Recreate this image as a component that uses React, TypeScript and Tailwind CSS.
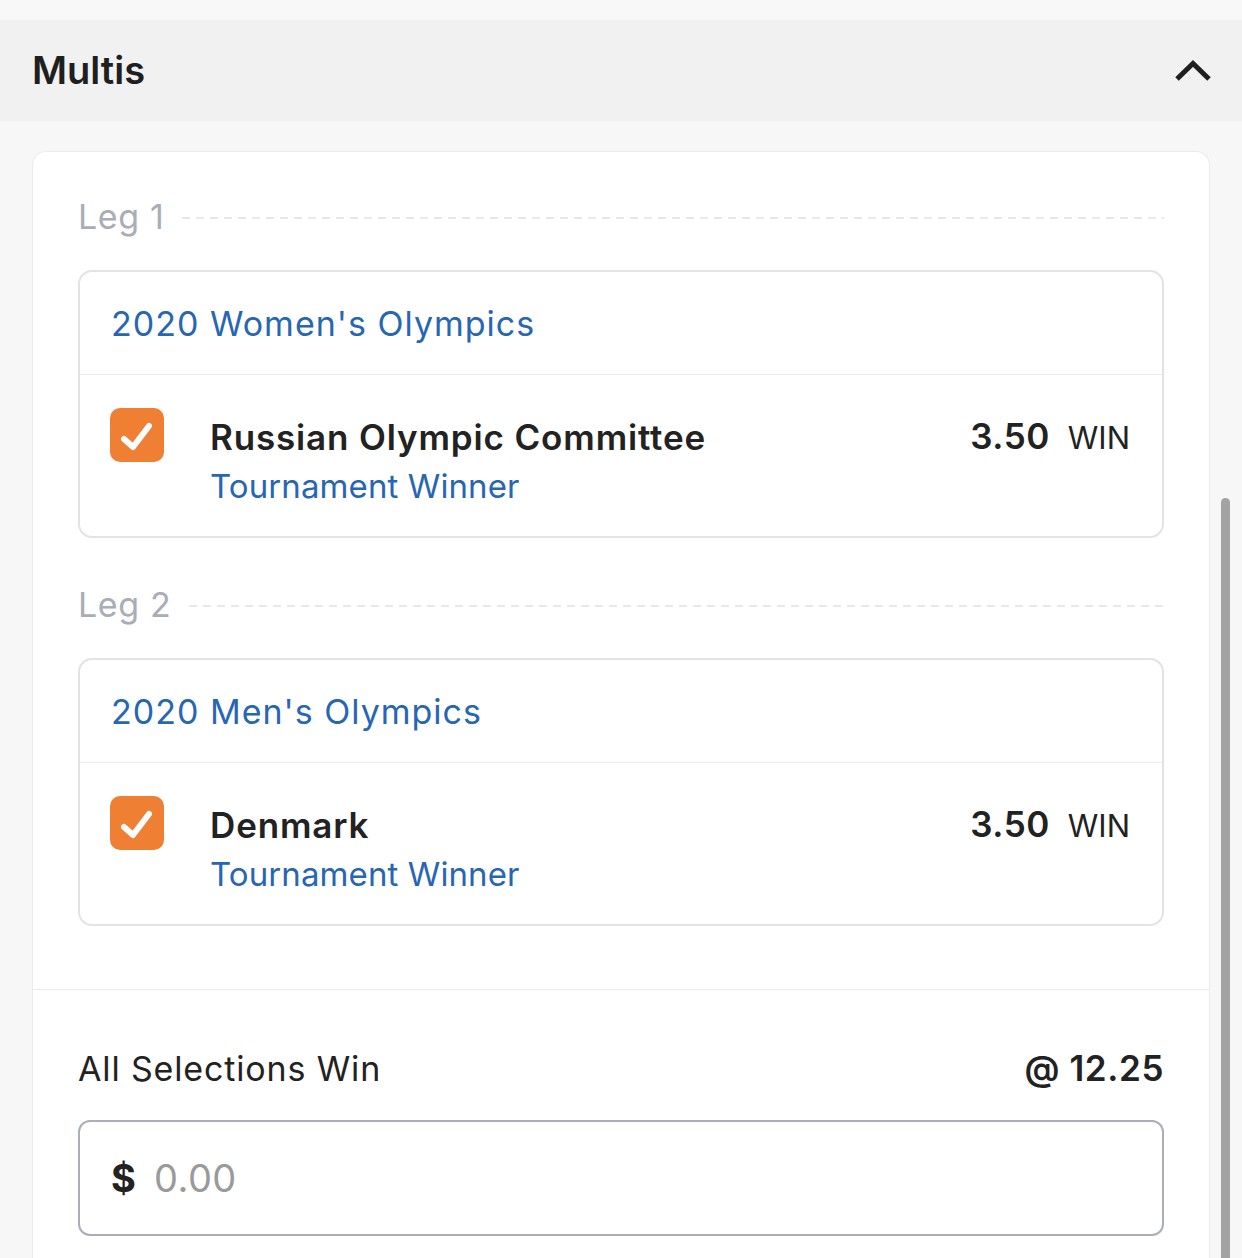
import React from "react";

const legs = [
  { id: 1, event: "2020 Women's Olympics", runner: "Russian Olympic Committee", market: "Tournament Winner", price: "3.50" },
  { id: 2, event: "2020 Men's Olympics", runner: "Denmark", market: "Tournament Winner", price: "3.50" },
];

function Check() {
  return (
    <div className="flex h-[54px] w-[54px] shrink-0 items-center justify-center rounded-[10px] bg-[#ef7f32]">
      <svg width="54" height="54" viewBox="0 0 54 54" fill="none" aria-hidden>
        <path d="M14 31 L23 39 L39 18" stroke="#fff" strokeWidth="6" strokeLinecap="round" strokeLinejoin="round" />
      </svg>
    </div>
  );
}

function LegLabel({ n }: { n: number }) {
  return (
    <div className="flex h-[40px] items-center gap-[18px]">
      <span className="text-[34px] leading-[40px] tracking-[0.6px] text-[#a9adb6]">Leg {n}</span>
      <div className="mt-[2px] h-[2px] flex-1 bg-[linear-gradient(to_right,#e8e8e8_60%,transparent_0%)] bg-[length:14px_2px] bg-repeat-x" />
    </div>
  );
}

function LegCard({ leg }: { leg: (typeof legs)[number] }) {
  return (
    <div className="rounded-[14px] border-2 border-[#e3e3e3] bg-white">
      <div className="flex h-[103px] items-center border-b border-[#ebebeb] pl-[31px] text-[34px] tracking-[1px] text-[#2766b3]">
        {leg.event}
      </div>
      <div className="flex items-start pb-[30px] pl-[30px] pr-[32px] pt-[33px]">
        <Check />
        <div className="ml-[46px] flex-1">
          <div className="flex items-center justify-between leading-[56px]">
            <span className="text-[35px] font-semibold tracking-[0.85px] text-[#222]">{leg.runner}</span>
            <span className="flex items-baseline gap-[18px]">
              <span className="text-[35px] font-semibold tracking-[0.5px] text-[#222]">{leg.price}</span>
              <span className="text-[31px] text-[#222]">WIN</span>
            </span>
          </div>
          <div className="text-[33px] leading-[40px] tracking-[0.1px] text-[#2766b3]">{leg.market}</div>
        </div>
      </div>
    </div>
  );
}

export default function App() {
  return (
    <div className="relative h-[1258px] overflow-hidden bg-[#f7f7f7] font-['Inter',sans-serif]">
      <div className="h-[20px] bg-[#f8f8f8]" />
      <div className="flex h-[101px] items-center justify-between bg-[#f1f1f1] pl-[32px] pr-[30px]">
        <h2 className="text-[38px] font-semibold text-[#1f1f1f]">Multis</h2>
        <svg width="38" height="26" viewBox="0 0 38 26" fill="none" aria-hidden>
          <path d="M3 21 L19 5.5 L35 21" stroke="#1f1f1f" strokeWidth="5" />
        </svg>
      </div>

      <div className="ml-[32px] mr-[32px] mt-[30px] rounded-t-[14px] border border-b-0 border-[#ebebeb] bg-white">
        <div className="px-[45px] pb-[63px] pt-[45px]">
          {legs.map((leg, i) => (
            <div key={leg.id} className={i > 0 ? "mt-[47px]" : ""}>
              <LegLabel n={leg.id} />
              <div className="mt-[33px]">
                <LegCard leg={leg} />
              </div>
            </div>
          ))}
        </div>

        <div className="border-t border-[#ebebeb] px-[45px] pb-[60px] pt-[56px]">
          <div className="flex h-[44px] items-center justify-between">
            <span className="text-[34px] tracking-[0.85px] text-[#222]">All Selections Win</span>
            <span className="text-[35px] font-semibold tracking-[0.6px] text-[#222]">@ 12.25</span>
          </div>
          <div className="mt-[30px] flex h-[116px] items-center rounded-[12px] border-2 border-[#a9aeb8] px-[31px]">
            <span className="text-[38px] font-bold text-[#222]">$</span>
            <span className="ml-[18px] text-[38px] tracking-[0.5px] text-[#9a9a9a]">0.00</span>
          </div>
        </div>
      </div>

      <div className="absolute right-[12px] top-[498px] h-[800px] w-[9px] rounded-full bg-[#a3a3a3]" />
    </div>
  );
}
